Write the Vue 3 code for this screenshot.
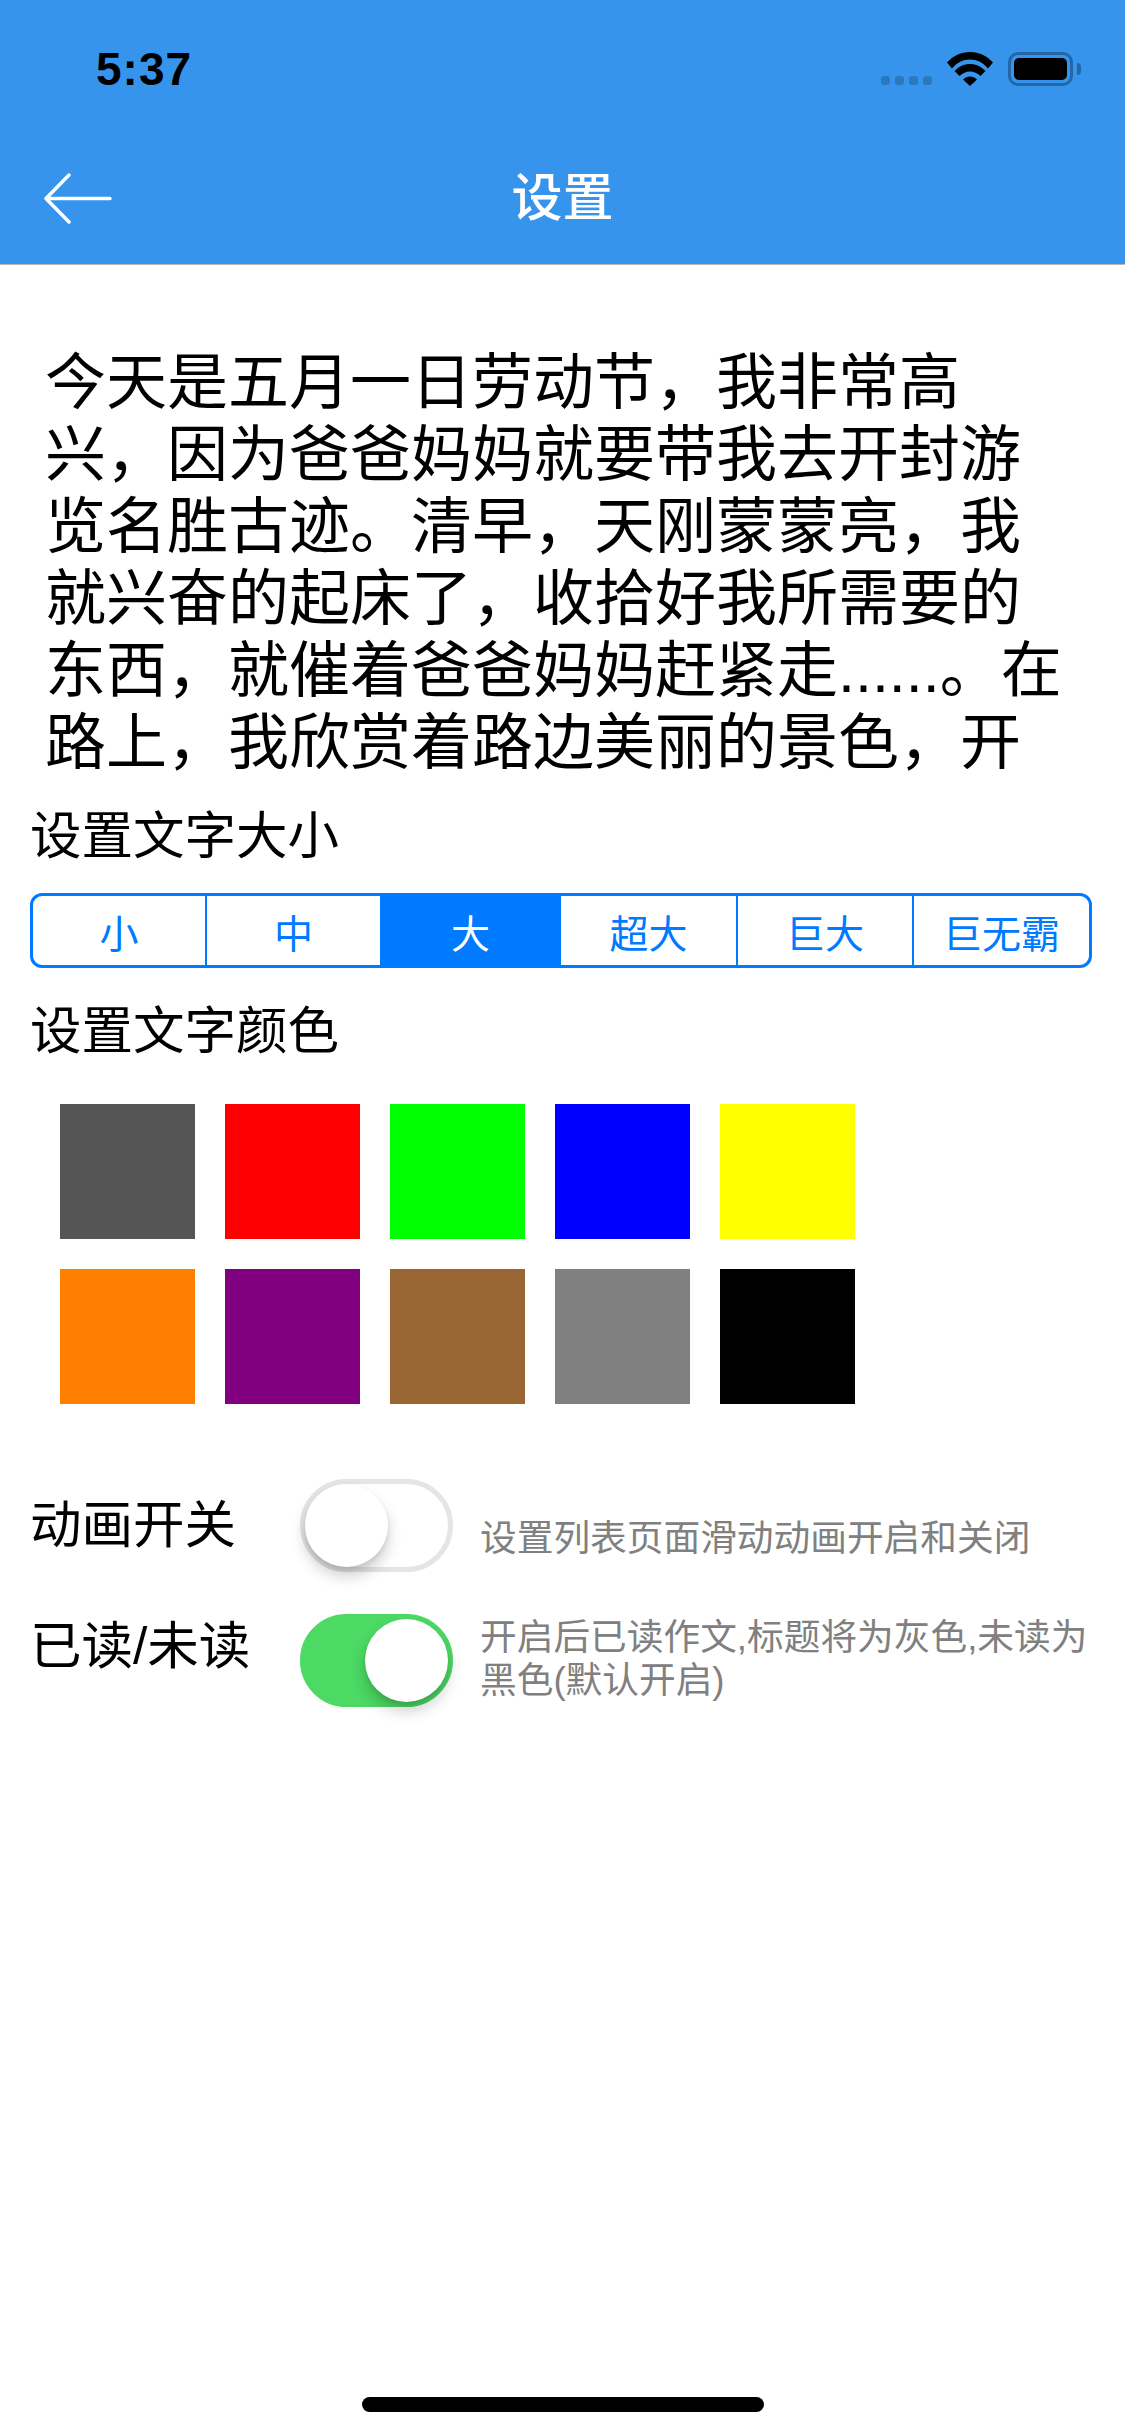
<template>
  <div class="page">
    <header class="header">
      <div class="status-bar">
        <span class="time">5:37</span>
        <div class="status-icons">
          <div class="signal">
            <i v-for="n in 4" :key="n"></i>
          </div>
          <svg class="wifi" width="46" height="34" viewBox="0 0 46 34">
            <path d="M0 10.500C6 4 14 0 23 0s17 4 23 10.500L41 16.500C36 10.500 30 7.500 23 7.500S10 10.500 5 16.500Z" fill="#000" />
            <path d="M7.500 19C12 14.500 17 12 23 12s11 2.500 15.500 7L33.500 24C30 21 27 19.500 23 19.500S16 21 12.500 24Z" fill="#000" />
            <path d="M16 27.500C18 25.500 20.500 24.500 23 24.500s5 1 7 3L23 34Z" fill="#000" />
          </svg>
          <div class="battery">
            <div class="battery-level"></div>
          </div>
          <div class="battery-nub"></div>
        </div>
      </div>
      <div class="nav-bar">
        <svg class="back" width="68" height="52" viewBox="0 0 68 52">
          <path d="M25 2 2 25.500 25 49M2 25.500H66" fill="none" stroke="#fff" stroke-width="3.500" stroke-linecap="round" stroke-linejoin="round" />
        </svg>
        <span class="nav-title">设置</span>
      </div>
    </header>

    <main class="content">
      <div class="sample">
        <div v-for="line in sampleLines" :key="line">{{ line }}</div>
      </div>

      <div class="label size-label">设置文字大小</div>
      <div class="segments">
        <div
          v-for="(size, index) in sizes"
          :key="size"
          class="segment"
          :class="{ active: index === activeSize }"
        >{{ size }}</div>
      </div>

      <div class="label color-label">设置文字颜色</div>
      <div class="colors">
        <div
          v-for="color in colors"
          :key="color"
          class="swatch"
          :style="{ backgroundColor: color }"
        ></div>
      </div>

      <div class="option option-anim">
        <span class="option-name">动画开关</span>
        <div class="switch"><div class="knob"></div></div>
        <p class="option-desc">设置列表页面滑动动画开启和关闭</p>
      </div>
      <div class="option option-read">
        <span class="option-name">已读/未读</span>
        <div class="switch on"><div class="knob"></div></div>
        <p class="option-desc">开启后已读作文,标题将为灰色,未读为<br />黑色(默认开启)</p>
      </div>
    </main>

    <div class="home-indicator"></div>
  </div>
</template>

<script setup>
const sampleLines = [
  '今天是五月一日劳动节，我非常高',
  '兴，因为爸爸妈妈就要带我去开封游',
  '览名胜古迹。清早，天刚蒙蒙亮，我',
  '就兴奋的起床了，收拾好我所需要的',
  '东西，就催着爸爸妈妈赶紧走......。在',
  '路上，我欣赏着路边美丽的景色，开'
]

const sizes = ['小', '中', '大', '超大', '巨大', '巨无霸']
const activeSize = 2

const colors = [
  '#555555', '#ff0000', '#00ff00', '#0000ff', '#ffff00',
  '#ff8000', '#800080', '#996633', '#808080', '#000000'
]
</script>

<style>
html, body {
  margin: 0;
  background: #fff;
}
</style>

<style scoped>
.page {
  position: relative;
  width: 1125px;
  height: 2436px;
  overflow: hidden;
  background: #fff;
  font-family: "Liberation Sans", "Noto Sans CJK SC", sans-serif;
  color: #000;
}

.header {
  height: 264px;
  background: #3694ec;
  border-bottom: 1px solid #b8b8b8;
}

.status-bar {
  height: 132px;
  display: flex;
  justify-content: space-between;
  padding: 0 44px 0 96px;
}
.time {
  margin-top: 42px;
  font-size: 46px;
  line-height: 54px;
  font-weight: 700;
  letter-spacing: 1px;
}
.status-icons {
  display: flex;
  align-items: flex-start;
  padding-top: 52px;
}
.signal {
  display: flex;
  gap: 5px;
  margin-top: 24px;
  margin-right: 15px;
}
.signal i {
  width: 9px;
  height: 9px;
  border-radius: 3px;
  background: #2c78bf;
}
.wifi {
  margin-right: 15px;
}
.battery {
  box-sizing: border-box;
  width: 65px;
  height: 34px;
  padding: 3px;
  border: 3px solid #2567a6;
  border-radius: 10px;
}
.battery-level {
  height: 100%;
  background: #000;
  border-radius: 5px;
}
.battery-nub {
  width: 4px;
  height: 12px;
  margin: 11px 0 0 4px;
  background: #2567a6;
  border-radius: 0 4px 4px 0;
}

.nav-bar {
  position: relative;
  height: 132px;
  display: flex;
  align-items: center;
  justify-content: center;
}
.back {
  position: absolute;
  left: 44px;
  top: 41px;
}
.nav-title {
  margin-top: 2px;
  color: #fff;
  font-size: 51px;
  font-weight: 500;
  line-height: 70px;
}

.content {
  padding: 82px 30px 0;
}

.sample {
  height: 432px;
  padding-left: 15px;
  font-size: 61px;
  line-height: 72px;
  white-space: nowrap;
}

.label {
  font-size: 51.500px;
  line-height: 70px;
}
.size-label {
  margin-top: 22px;
}
.color-label {
  margin-top: 28px;
}

.segments {
  display: grid;
  grid-template-columns: 174px 175px 179px 177px 176px 175px;
  box-sizing: border-box;
  width: 1062px;
  height: 75px;
  margin-top: 22px;
  border: 3px solid #007aff;
  border-radius: 12px;
  overflow: hidden;
}
.segment {
  display: flex;
  align-items: center;
  justify-content: center;
  color: #007aff;
  font-size: 39px;
  border-right: 2px solid #007aff;
}
.segment:last-child {
  border-right: 0;
}
.segment.active {
  background: #007aff;
  color: #fff;
}

.colors {
  display: grid;
  grid-template-columns: repeat(5, 135px);
  gap: 30px;
  margin: 38px 0 0 30px;
}
.swatch {
  width: 135px;
  height: 135px;
}

.option {
  display: flex;
}
.option-anim {
  margin-top: 75px;
}
.option-read {
  margin-top: 42px;
}
.option-name {
  width: 270px;
  flex: none;
  font-size: 51.500px;
  line-height: 70px;
}
.option-anim .option-name {
  margin-top: 11px;
}
.option-read .option-name {
  margin-top: -3px;
}
.option-desc {
  margin: 0;
  font-size: 36.700px;
  line-height: 43px;
  color: #808080;
  white-space: nowrap;
}
.option-anim .option-desc {
  margin: 38px 0 0 27px;
}
.option-read .option-desc {
  margin: 2px 0 0 27px;
}

.switch {
  position: relative;
  box-sizing: border-box;
  flex: none;
  width: 153px;
  height: 93px;
  border: 5px solid #e5e5e5;
  border-radius: 47px;
  background: #fff;
}
.switch.on {
  background: #4cd964;
  border-color: #4cd964;
}
.knob {
  width: 83px;
  height: 83px;
  border-radius: 50%;
  background: #fff;
  box-shadow: 0 9px 15px rgba(0, 0, 0, 0.2), 0 3px 4px rgba(0, 0, 0, 0.08);
}
.switch.on .knob {
  margin-left: 60px;
}

.home-indicator {
  position: absolute;
  left: 362px;
  bottom: 24px;
  width: 402px;
  height: 15px;
  border-radius: 8px;
  background: #000;
}
</style>
